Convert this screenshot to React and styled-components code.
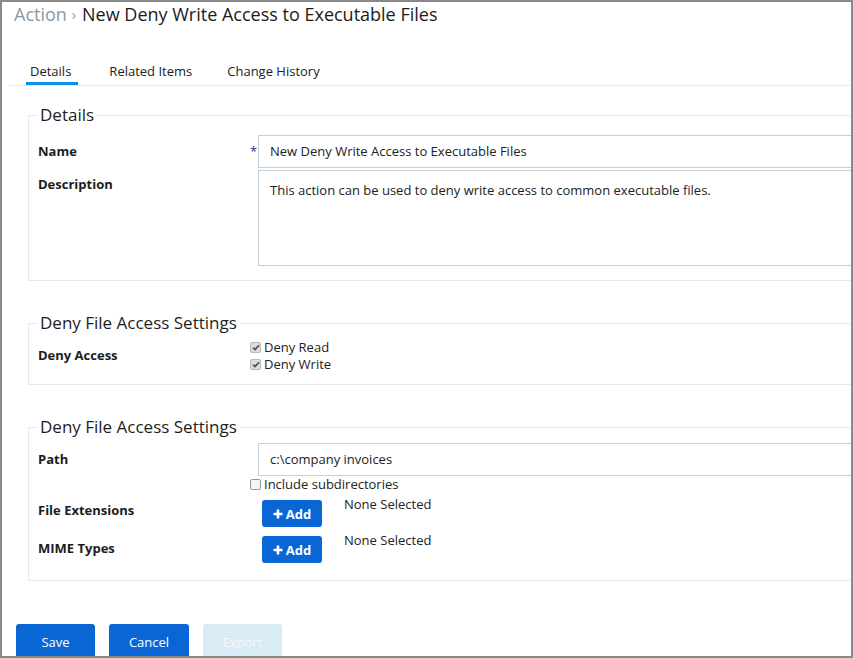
import styled, { createGlobalStyle } from "styled-components";

const GlobalStyle = createGlobalStyle`
  html, body {
    margin: 0;
    padding: 0;
    background: #ffffff;
  }
  body {
    font-family: "Open Sans", "Liberation Sans", sans-serif;
    color: #222;
  }
`;

const Frame = styled.div`
  width: 853px;
  height: 658px;
  box-sizing: border-box;
  border: 2px solid #8a8a8a;
  overflow: hidden;
  background: #fff;
`;

const Page = styled.div`
  width: 1000px;
`;

const Header = styled.h1`
  margin: 0;
  padding: 0 0 0 12px;
  height: 28px;
  line-height: 24px;
  font-size: 18px;
  font-weight: 400;
  color: #1b1b1b;
  white-space: nowrap;
`;

const Crumb = styled.span`
  color: #8c99a4;
`;

const Sep = styled.span`
  color: #8c99a4;
  font-size: 14px;
  margin: 0 6px 0 5px;
  position: relative;
  top: -1px;
`;

const TabBar = styled.div`
  display: flex;
  margin: 32px 0 0 7px;
  padding-left: 17px;
  border-bottom: 1px solid #e9ebed;
`;

const Tab = styled.div`
  font-size: 13px;
  line-height: 18px;
  padding: 0 4px 2px;
  margin-right: 27px;
  color: #222;
  border-bottom: 3px solid ${(p) => (p.$active ? "#0a90e6" : "transparent")};
  padding-right: ${(p) => (p.$active ? "7px" : "4px")};
`;

const Content = styled.div`
  padding: 17px 0 0 26px;
  display: flex;
  flex-direction: column;
  gap: 30px;
`;

const Fieldset = styled.fieldset`
  margin: 0;
  width: 940px;
  border: 1px solid #e6eaed;
  padding: ${(p) => p.$top ?? 4}px 0 ${(p) => p.$bottom ?? 15}px 9px;
  min-width: 0;
`;

const Legend = styled.legend`
  font-size: 17px;
  line-height: 24px;
  padding: 0 3px;
  margin-left: -1px;
  color: #1e1e1e;
`;

const Row = styled.div`
  display: grid;
  grid-template-columns: 212px 1fr;
  margin-bottom: ${(p) => p.$gap || 0}px;
`;

const Label = styled.div`
  font-size: 13px;
  font-weight: 700;
  line-height: 18px;
  padding-top: ${(p) => p.$top ?? 7}px;
  color: #1c1c1c;
`;

const Field = styled.div`
  display: flex;
  flex-direction: column;
`;

const InputLine = styled.div`
  display: flex;
  align-items: flex-start;
`;

const Req = styled.span`
  width: 8px;
  font-size: 13px;
  line-height: 32px;
  color: #2a2a8a;
`;

const Spacer = styled.span`
  width: 8px;
`;

const TextBox = styled.div`
  flex: 1;
  box-sizing: border-box;
  height: ${(p) => p.$h || 33}px;
  border: 1px solid #c4d0da;
  padding: ${(p) => (p.$multi ? "10px 11px" : "0 11px")};
  font-size: 13px;
  line-height: ${(p) => (p.$multi ? "18px" : "31px")};
  color: #222;
`;

const CheckRow = styled.label`
  display: flex;
  align-items: center;
  font-size: 13px;
  line-height: 17px;
  color: #222;
`;

const Box = styled.span`
  width: 11px;
  height: 11px;
  box-sizing: border-box;
  border: 1px solid ${(p) => (p.$checked ? "#b9b9b9" : "#9a9a9a")};
  border-radius: 2px;
  background: ${(p) => (p.$checked ? "#dcdcdc" : "#f4f4f4")};
  margin-right: 3px;
  display: flex;
  align-items: center;
  justify-content: center;
`;

const AddRow = styled.div`
  display: flex;
  align-items: flex-start;
  padding: ${(p) => p.$top || 0}px 0 0 12px;
`;

const AddButton = styled.button`
  width: 60px;
  height: 27px;
  border: none;
  border-radius: 3px;
  background: #0a66d4;
  color: #fff;
  font-family: inherit;
  font-size: 13px;
  font-weight: 700;
  display: flex;
  align-items: center;
  justify-content: center;
  gap: 3px;
  padding: 0;
`;

const Muted = styled.span`
  font-size: 13px;
  line-height: 18px;
  margin: -5px 0 0 22px;
  color: #222;
`;

const Footer = styled.div`
  display: flex;
  gap: 14px;
  padding: 43px 0 0 14px;
`;

const ActionButton = styled.button`
  width: ${(p) => p.$w || 79}px;
  height: 36px;
  border: none;
  border-radius: 3px;
  background: ${(p) => (p.$disabled ? "#d9ebf4" : "#0a66d4")};
  color: ${(p) => (p.$disabled ? "#f4f9fc" : "#fff")};
  font-family: inherit;
  font-size: 13px;
  line-height: 32px;
  padding: 0;
`;

const Check = ({ checked, children }) => (
  <CheckRow>
    <Box $checked={checked}>
      {checked && (
        <svg width="8" height="7" viewBox="0 0 8 7">
          <path d="M1 3.6 L3 5.6 L7 1.2" fill="none" stroke="#4a4a4a" strokeWidth="1.6" />
        </svg>
      )}
    </Box>
    {children}
  </CheckRow>
);

const Plus = () => (
  <svg width="10" height="10" viewBox="0 0 10 10">
    <path d="M5 0.5v9M0.5 5h9" stroke="#fff" strokeWidth="2.6" />
  </svg>
);

export default function App() {
  return (
    <Frame>
      <GlobalStyle />
      <Page>
        <Header>
          <Crumb>Action</Crumb>
          <Sep>›</Sep>
          New Deny Write Access to Executable Files
        </Header>
        <TabBar>
          <Tab $active>Details</Tab>
          <Tab>Related Items</Tab>
          <Tab>Change History</Tab>
        </TabBar>
        <Content>
          <Fieldset $top={8} $bottom={14}>
            <Legend>Details</Legend>
            <Row $gap={2}>
              <Label>Name</Label>
              <InputLine>
                <Req>*</Req>
                <TextBox>New Deny Write Access to Executable Files</TextBox>
              </InputLine>
            </Row>
            <Row>
              <Label $top={5}>Description</Label>
              <InputLine>
                <Spacer />
                <TextBox $multi $h={96}>
                  This action can be used to deny write access to common executable files.
                </TextBox>
              </InputLine>
            </Row>
          </Fieldset>

          <Fieldset $bottom={11}>
            <Legend>Deny File Access Settings</Legend>
            <Row>
              <Label $top={7}>Deny Access</Label>
              <Field>
                <Check checked>Deny Read</Check>
                <Check checked>Deny Write</Check>
              </Field>
            </Row>
          </Fieldset>

          <Fieldset $bottom={17}>
            <Legend>Deny File Access Settings</Legend>
            <Row>
              <Label>Path</Label>
              <Field>
                <InputLine>
                  <Spacer />
                  <TextBox>c:\company invoices</TextBox>
                </InputLine>
                <Check>Include subdirectories</Check>
              </Field>
            </Row>
            <Row $gap={9}>
              <Label $top={8}>File Extensions</Label>
              <AddRow $top={7}>
                <AddButton>
                  <Plus />
                  Add
                </AddButton>
                <Muted>None Selected</Muted>
              </AddRow>
            </Row>
            <Row>
              <Label $top={3}>MIME Types</Label>
              <AddRow>
                <AddButton>
                  <Plus />
                  Add
                </AddButton>
                <Muted>None Selected</Muted>
              </AddRow>
            </Row>
          </Fieldset>
        </Content>
        <Footer>
          <ActionButton>Save</ActionButton>
          <ActionButton $w={80}>Cancel</ActionButton>
          <ActionButton $disabled>Export</ActionButton>
        </Footer>
      </Page>
    </Frame>
  );
}
